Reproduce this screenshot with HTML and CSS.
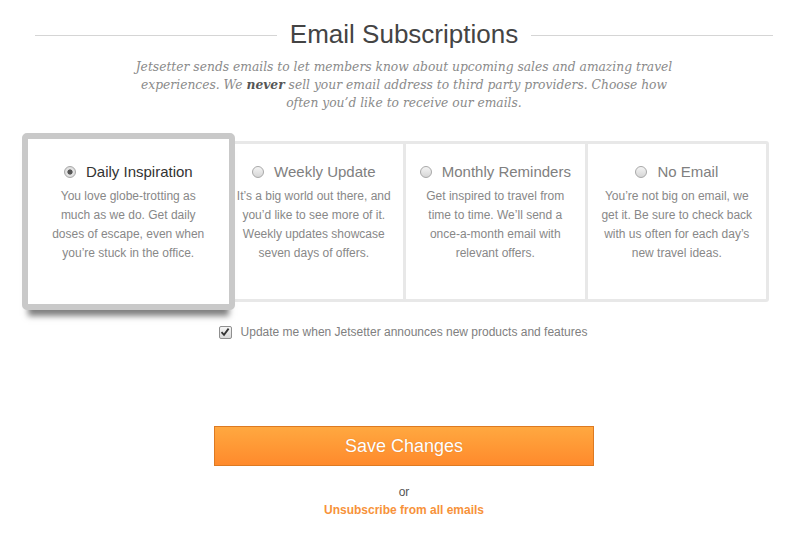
FILE: index.html
```html
<!DOCTYPE html>
<html lang="en">
<head>
    <meta charset="UTF-8">
    <title>Email Subscriptions - Jetsetter</title>
    <link rel="stylesheet" href="styles.css">
</head>
<body>
    <div class="page">
        <div class="heading">
            <span class="rule"></span>
            <h1>Email Subscriptions</h1>
            <span class="rule"></span>
        </div>
        <p class="intro">Jetsetter sends emails to let members know about upcoming sales and amazing travel experiences. We <b>never</b> sell your email address to third party providers. Choose how often you’d like to receive our emails.</p>

        <div class="options">
            <label class="option selected">
                <span class="option-title"><input type="radio" name="freq" checked> Daily Inspiration</span>
                <span class="option-text">You love globe-trotting as much as we do. Get daily doses of escape, even when you’re stuck in the office.</span>
            </label>
            <label class="option">
                <span class="option-title"><input type="radio" name="freq"> Weekly Update</span>
                <span class="option-text">It’s a big world out there, and you’d like to see more of it. Weekly updates showcase seven days of offers.</span>
            </label>
            <label class="option">
                <span class="option-title"><input type="radio" name="freq"> Monthly Reminders</span>
                <span class="option-text">Get inspired to travel from time to time. We’ll send a once-a-month email with relevant offers.</span>
            </label>
            <label class="option">
                <span class="option-title"><input type="radio" name="freq"> No Email</span>
                <span class="option-text">You’re not big on email, we get it. Be sure to check back with us often for each day’s new travel ideas.</span>
            </label>
        </div>

        <label class="updates">
            <span class="checkbox"><svg width="10" height="10" viewBox="0 0 10 10"><path d="M1.5 5.2 L4 7.8 L8.6 1.6" fill="none" stroke="#333" stroke-width="1.8"/></svg></span>
            Update me when Jetsetter announces new products and features
        </label>

        <div class="actions">
            <button class="save">Save Changes</button>
            <div class="or">or</div>
            <a class="unsubscribe" href="#">Unsubscribe from all emails</a>
        </div>
    </div>
</body>
</html>
```

FILE: styles.css
```css
body {
    margin: 0;
    background: #fff;
    font-family: "Liberation Sans", Arial, sans-serif;
    color: #777;
}
.page {
    width: 738px;
    margin-left: 35px;
}
.heading {
    display: flex;
    align-items: center;
    gap: 13px;
    padding-top: 20px;
}
.heading h1 {
    margin: 0;
    font-size: 26px;
    line-height: 28px;
    font-weight: normal;
    color: #444;
}
.rule {
    flex: 1;
    height: 1px;
    margin-top: 3px;
    background: #d5d5d5;
}
.intro {
    width: 560px;
    margin: 10px auto 0;
    text-align: center;
    font-family: "DejaVu Serif", Georgia, serif;
    font-style: italic;
    font-size: 12.3px;
    line-height: 18px;
    color: #8a8a8a;
}
.intro b {
    color: #555;
}
.options {
    display: grid;
    grid-template-columns: repeat(4, 1fr);
    width: 732px;
    height: 161px;
    box-sizing: border-box;
    margin: 29px 0 0 2px;
    border: 3px solid #e8e8e8;
    border-radius: 3px;
}
.option {
    display: block;
    padding: 18px 11px 0;
    text-align: center;
    cursor: pointer;
}
.option + .option {
    border-left: 3px solid #e8e8e8;
}
.option.selected {
    position: relative;
    z-index: 1;
    margin: -11px -13px -11px -18px;
    padding: 23px 18px 0;
    background: #fff;
    border: 6px solid #c9c9c9;
    border-radius: 5px;
    box-shadow: 0 12px 6px -6px rgba(0, 0, 0, 0.5);
}
.option-title {
    display: block;
    font-size: 15px;
    line-height: 20px;
    color: #808080;
    margin-bottom: 5px;
}
.selected .option-title {
    color: #333;
}
.option-title input {
    appearance: none;
    -webkit-appearance: none;
    width: 12px;
    height: 12px;
    margin: 0 6px 0 0;
    vertical-align: -1px;
    border: 1px solid #a8a8a8;
    border-radius: 50%;
    background: linear-gradient(#f4f4f4, #d6d6d6);
}
.option-title input:checked {
    background: radial-gradient(circle, #555 0, #555 2.2px, #e6e6e6 3px, #d0d0d0 100%);
}
.option-text {
    display: block;
    font-size: 12px;
    line-height: 19px;
    color: #888;
}
.updates {
    display: flex;
    justify-content: center;
    align-items: center;
    gap: 9px;
    margin-top: 22px;
    font-size: 12px;
    line-height: 16px;
    color: #808080;
}
.checkbox {
    display: inline-flex;
    align-items: center;
    justify-content: center;
    width: 11px;
    height: 11px;
    margin-left: -2px;
    border: 1px solid #8f8f8f;
    border-radius: 2px;
    background: linear-gradient(#f5f5f5, #d8d8d8);
}
.actions {
    text-align: center;
}
.save {
    display: block;
    width: 380px;
    height: 40px;
    margin: 86px auto 0;
    border: 1px solid #dd7a22;
    background: linear-gradient(#ffa840, #ff8a2c);
    color: #fff;
    font-family: "Liberation Sans", Arial, sans-serif;
    font-size: 18px;
    text-shadow: 0 0 1px rgba(180, 80, 0, 0.5);
    cursor: pointer;
}
.or {
    margin-top: 19px;
    font-size: 12px;
    line-height: 15px;
    color: #555;
}
.unsubscribe {
    font-size: 12px;
    line-height: 16px;
    font-weight: bold;
    color: #f7923a;
    text-decoration: none;
}
```
